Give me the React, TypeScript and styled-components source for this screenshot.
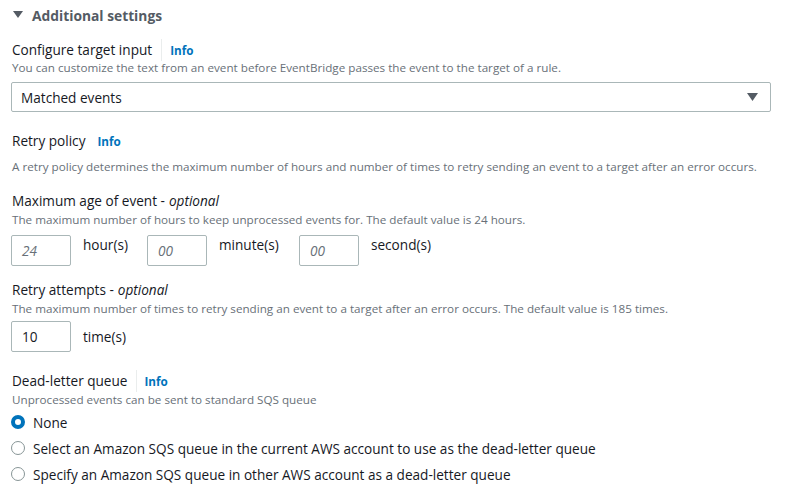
import styled, { createGlobalStyle } from 'styled-components';

const GlobalStyle = createGlobalStyle`
  html, body {
    margin: 0;
    padding: 0;
    background: #ffffff;
  }
  body {
    font-family: 'Open Sans', 'Noto Sans', sans-serif;
    color: #16191f;
  }
`;

const Page = styled.div`
  padding: 5px 15px 0 11px;
  width: 786px;
  box-sizing: border-box;
`;

const SectionHeader = styled.div`
  display: flex;
  align-items: center;
  gap: 9px;
  height: 20px;
  font-size: 13.8px;
  font-weight: 700;
  color: #545b64;
  padding-left: 2px;
`;

const Caret = styled.svg`
  width: 10px;
  height: 8px;
  fill: currentColor;
  flex: none;
`;

const Field = styled.div<{ $top: number }>`
  margin-top: ${(p) => p.$top}px;
`;

const LabelRow = styled.div`
  display: flex;
  align-items: center;
  height: 20px;
  padding-left: 1px;
  font-size: 13.6px;
  line-height: 20px;
  color: #16191f;
`;

const Optional = styled.i`
  font-style: italic;
  margin-left: 4px;
`;

const Divider = styled.span<{ $right?: number }>`
  width: 1px;
  height: 22px;
  background: #eaeded;
  margin: 0 ${(p) => p.$right ?? 8}px 0 9px;
`;

const InfoLink = styled.a<{ $gap?: number }>`
  font-size: 11.7px;
  font-weight: 700;
  color: #0073bb;
  text-decoration: none;
  margin-left: ${(p) => p.$gap ?? 0}px;
`;

const Description = styled.div<{ $top?: number }>`
  font-size: 11.68px;
  line-height: 16px;
  padding-left: 1px;
  color: #687078;
  margin-top: ${(p) => p.$top ?? 0}px;
`;

const Select = styled.div`
  margin-top: 6px;
  height: 30px;
  box-sizing: border-box;
  border: 1px solid #aab7b8;
  border-radius: 2px;
  display: flex;
  align-items: center;
  justify-content: space-between;
  padding: 0 12px 0 9px;
  font-size: 13.6px;
  color: #16191f;
`;

const SelectCaret = styled.svg`
  width: 11px;
  height: 9px;
  fill: #545b64;
`;

const InputRow = styled.div<{ $top: number; $raised?: boolean }>`
  display: flex;
  align-items: ${(p) => (p.$raised ? 'flex-start' : 'center')};
  margin-top: ${(p) => p.$top}px;
`;

const NumberBox = styled.div<{ $placeholder?: boolean }>`
  width: 60px;
  height: 31px;
  box-sizing: border-box;
  border: 1px solid #aab7b8;
  border-radius: 2px;
  display: flex;
  align-items: center;
  padding-left: 10px;
  font-size: 13.6px;
  font-style: ${(p) => (p.$placeholder ? 'italic' : 'normal')};
  color: ${(p) => (p.$placeholder ? '#687078' : '#16191f')};
`;

const Unit = styled.span<{ $width: number }>`
  width: ${(p) => p.$width}px;
  padding-left: 12px;
  box-sizing: border-box;
  font-size: 13.6px;
  line-height: 20px;
  color: #16191f;
`;

const RadioList = styled.div`
  margin-top: 4px;
  display: flex;
  flex-direction: column;
  gap: 6px;
`;

const RadioRow = styled.label`
  display: flex;
  align-items: center;
  height: 20px;
  font-size: 13.6px;
  color: #16191f;
  gap: 8px;
`;

const RadioDot = styled.span<{ $checked?: boolean }>`
  width: 14px;
  height: 14px;
  box-sizing: border-box;
  border-radius: 50%;
  flex: none;
  border: ${(p) => (p.$checked ? '4px solid #0073bb' : '1.5px solid #879596')};
  background: #ffffff;
`;

export default function App() {
  return (
    <>
      <GlobalStyle />
      <Page>
        <SectionHeader>
          <Caret viewBox="0 0 10 8">
            <polygon points="0,0 10,0 5,7" />
          </Caret>
          Additional settings
        </SectionHeader>

        <Field $top={15}>
          <LabelRow>
            Configure target input
            <Divider />
            <InfoLink>Info</InfoLink>
          </LabelRow>
          <Description>
            You can customize the text from an event before EventBridge passes the event to the target of a rule.
          </Description>
          <Select>
            Matched events
            <SelectCaret viewBox="0 0 11 9">
              <polygon points="0,0 11,0 5.5,8" />
            </SelectCaret>
          </Select>
        </Field>

        <Field $top={19}>
          <LabelRow>
            Retry policy
            <InfoLink $gap={12}>Info</InfoLink>
          </LabelRow>
          <Description $top={8}>
            A retry policy determines the maximum number of hours and number of times to retry sending an event to a target after an error occurs.
          </Description>
        </Field>

        <Field $top={16}>
          <LabelRow>
            Maximum age of event -<Optional>optional</Optional>
          </LabelRow>
          <Description $top={1}>
            The maximum number of hours to keep unprocessed events for. The default value is 24 hours.
          </Description>
          <InputRow $top={7} $raised>
            <NumberBox $placeholder>24</NumberBox>
            <Unit $width={76}>hour(s)</Unit>
            <NumberBox $placeholder>00</NumberBox>
            <Unit $width={92}>minute(s)</Unit>
            <NumberBox $placeholder>00</NumberBox>
            <Unit $width={90}>second(s)</Unit>
          </InputRow>
        </Field>

        <Field $top={14}>
          <LabelRow>
            Retry attempts -<Optional>optional</Optional>
          </LabelRow>
          <Description $top={1}>
            The maximum number of times to retry sending an event to a target after an error occurs. The default value is 185 times.
          </Description>
          <InputRow $top={4}>
            <NumberBox>10</NumberBox>
            <Unit $width={80}>time(s)</Unit>
          </InputRow>
        </Field>

        <Field $top={19}>
          <LabelRow>
            Dead-letter queue
            <Divider $right={7} />
            <InfoLink>Info</InfoLink>
          </LabelRow>
          <Description $top={1}>Unprocessed events can be sent to standard SQS queue</Description>
          <RadioList>
            <RadioRow>
              <RadioDot $checked />
              None
            </RadioRow>
            <RadioRow>
              <RadioDot />
              Select an Amazon SQS queue in the current AWS account to use as the dead-letter queue
            </RadioRow>
            <RadioRow>
              <RadioDot />
              Specify an Amazon SQS queue in other AWS account as a dead-letter queue
            </RadioRow>
          </RadioList>
        </Field>
      </Page>
    </>
  );
}
